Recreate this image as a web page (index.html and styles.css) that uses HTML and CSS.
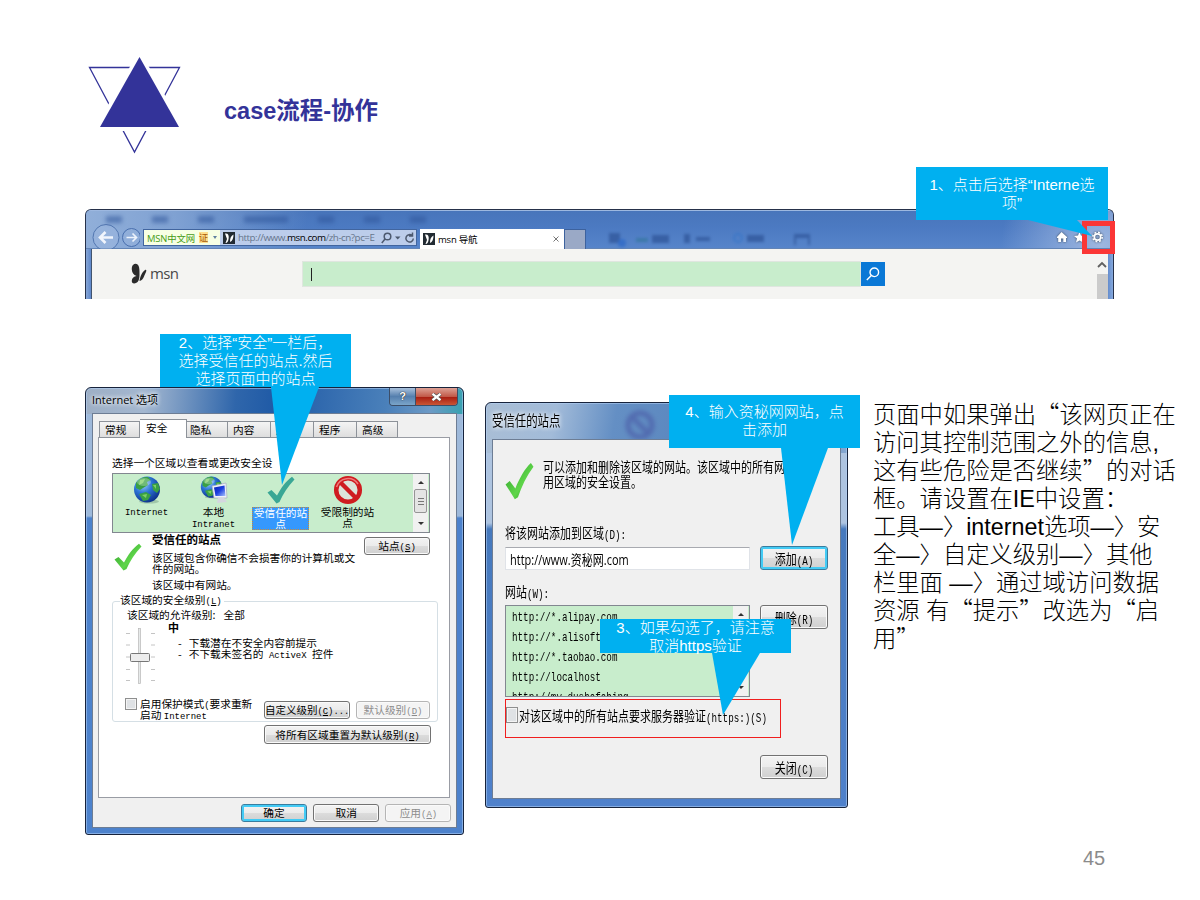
FILE: index.html
```html
<!DOCTYPE html>
<html lang="zh-CN">
<head>
<meta charset="utf-8">
<title>case流程-协作</title>
<link rel="stylesheet" href="styles.css">
</head>
<body>
<svg class="defs" aria-hidden="true">
  <defs>
    <linearGradient id="checkGreen" x1="0" y1="0" x2="1" y2="1"><stop offset="0" stop-color="#2f9e2b"/><stop offset=".6" stop-color="#5fd64a"/><stop offset="1" stop-color="#1f8f1d"/></linearGradient>
    <radialGradient id="sea" cx=".35" cy=".3" r=".75"><stop offset="0" stop-color="#9fd4ff"/><stop offset=".45" stop-color="#2c74d6"/><stop offset="1" stop-color="#0b2f88"/></radialGradient>
    <linearGradient id="screen" x1="0" y1="0" x2="1" y2="1"><stop offset="0" stop-color="#0a1fb0"/><stop offset=".5" stop-color="#1c3fe0"/><stop offset="1" stop-color="#a9c3ff"/></linearGradient>
    <symbol id="check" viewBox="0 0 28 28" preserveAspectRatio="none"><path d="M.5 16.500 L4.500 14 L10 19.500 C14 12 19 5 25 .8 L27.500 3.500 C21 10 16 18 12.500 26 L9.500 27.500 Z"/></symbol>
    <symbol id="globe" viewBox="0 0 28 28"><ellipse cx="16" cy="25.500" rx="10" ry="2" fill="#8fb79a" opacity=".7"/><circle cx="14" cy="13.500" r="13" fill="url(#sea)"/><path d="M3 7 C6 2 11 .8 15 1 L18 4 L14 6 L15 9 L10 12 L7 14 L3 12 Z M19 8 L25 7 L27 13 L24 17 L20 14 Z M6 18 L13 16 L18 19 L15 24 L10 25 Z" fill="#3aa044"/><path d="M7 4 L12 3 L10 7 L6 9 Z M20 9 L23 9 L23 13 Z M9 19 L14 18 L13 22 Z" fill="#8fdc6c" opacity=".8"/><ellipse cx="11" cy="6" rx="7" ry="4" fill="#fff" opacity=".28"/></symbol>
    <symbol id="butterfly" viewBox="0 0 16 21"><path d="M2 2C4 0 7 .5 8 4C8.700 7 8.500 9.500 8.500 12C8.500 16 7.500 19 5 20C2.500 21 .5 20 .8 17.500C1 15 3 13.500 5.500 13C2.500 12 1 9.500 .8 6.500C.7 4.500 1 3 2 2Z"/><path d="M8.500 18C9 14 11 9 14 7C15.300 6.500 15.700 7.500 15 9C14.200 11 13.500 12 13 13.500C12.300 15.800 10.500 17.500 8.500 18Z"/></symbol>
  </defs>
</svg>

<main class="slide">
  <header class="head">
    <svg class="mark" width="94" height="98" viewBox="0 0 94 98">
      <path d="M1.500 11.500H91.500L46.500 96Z" fill="none" stroke="#333399" stroke-width="1.300"/>
      <path d="M51.500 -6 L97 75 H5Z" fill="#fff"/>
      <path d="M51.500 1 L91 71 H12Z" fill="#333399"/>
    </svg>
    <h1 class="title">case流程-协作</h1>
  </header>

  <section class="browser">
    <div class="chrome">
      <div class="ghost-menu"><i></i><i></i><i></i><i class="wide"></i><i></i><i></i><i></i></div>
      <div class="navrow">
        <svg class="nav" width="54" height="25" viewBox="0 0 54 25" fill="none"><circle cx="20" cy="13.500" r="13" fill="#a9bfe4" fill-opacity=".35" stroke="#5377b0"/><path d="M27 13.500H14M19.500 8L14 13.500L19.500 19" stroke="#f1f5fc" stroke-width="2.600"/><circle cx="45.500" cy="13.500" r="9" fill="#a9bfe4" fill-opacity=".25" stroke="#4a6fae"/><path d="M40.500 13.500H50M46.500 9.500L50.500 13.500L46.500 17.500" stroke="#edf3fc" stroke-width="1.700"/></svg>
        <div class="address">
          <span class="site">MSN中文网<b>证</b><i class="caret"></i></span>
          <svg class="fav" width="12" height="12" viewBox="0 0 12 12"><rect width="12" height="12" fill="#222b33"/><path d="M2 1.500C5 1 6 3 5.700 6C5.300 9.500 4.500 11 2.500 11L4 7ZM7 10C7 6 8 4 10.500 2.500C10.500 6 9.500 9 7 10Z" fill="#fff"/></svg>
          <span class="url">http://www.<strong>msn.com</strong>/zh-cn?pc=E</span>
          <svg class="addr-tools" width="34" height="12" viewBox="0 0 34 12" fill="none" stroke="#4d5a70" stroke-width="1.500"><circle cx="6.500" cy="4.500" r="3.300"/><path d="M4 7L.8 11"/><path d="M14 4.500H19.500L16.700 7.500Z" fill="#4d5a70" stroke="none"/><path d="M31 3.500A3.700 3.700 0 1 0 32.300 6.500M31.500 .5V4H28"/></svg>
        </div>
        <div class="tab-page"><svg width="12" height="12" viewBox="0 0 12 12"><rect width="12" height="12" fill="#222b33"/><path d="M2 1.500C5 1 6 3 5.700 6C5.300 9.500 4.500 11 2.500 11L4 7ZM7 10C7 6 8 4 10.500 2.500C10.500 6 9.500 9 7 10Z" fill="#fff"/></svg><span>msn 导航</span><svg class="x" width="6" height="6" viewBox="0 0 6 6"><path d="M.5 .5L5.500 5.500M5.500 .5L.5 5.500" stroke="#777"/></svg></div>
        <div class="tab-new"></div>
        <svg class="ghost-tools" width="210" height="18" viewBox="0 0 210 18"><g fill="#30569a"><rect x="3" y="4" width="11" height="10"/><path d="M46 6H63V14H46ZM78 5H84V14H78ZM90 8H104V12H90ZM141 6H158V13H141ZM188 5H204V9H188ZM188 9H190V16H188ZM202 9H204V16H202Z"/></g><circle cx="16" cy="14" r="4" fill="#2d68c7"/><circle cx="132" cy="9" r="4" fill="none" stroke="#3575c8" stroke-width="2"/><path d="M30 9H42V13H30Z" fill="#35769e"/></svg>
        <svg class="tools" width="50" height="14" viewBox="0 0 50 14" fill="#fff"><path d="M0 7L4.500 2L10 7V8H9V12H6.300V8.500H4V12H1.200V8H0Z"/><path d="M22.500 2L24 5.600L28 6L25 8.600L26 12.500L22.500 10.400L19 12.500L20 8.600L17 6L21 5.600Z"/><g fill="none" stroke="#fff"><circle cx="40.500" cy="7" r="3.200" stroke-width="1.700"/><circle cx="40.500" cy="7" r="4.700" stroke-width="1.500" stroke-dasharray="1.850 1.840"/></g></svg>
      </div>
    </div>
    <div class="page">
      <svg class="bf" width="16" height="21"><use href="#butterfly"/></svg><span class="msn">msn</span>
      <div class="search"><i></i></div>
      <div class="go"><svg width="14" height="14" viewBox="0 0 14 14" fill="none" stroke="#fff" stroke-width="1.400"><circle cx="8.300" cy="5.300" r="4.300"/><path d="M5.300 8.500L.8 13"/></svg></div>
      <div class="vscroll"><svg width="10" height="7" viewBox="0 0 10 7"><path d="M1 6L5 2L9 6" fill="none" stroke="#606060" stroke-width="1.800"/></svg><i></i></div>
    </div>
  </section>
  <div class="redbox"></div>

  <div class="row">
    <section class="dlg options">
      <div class="bar"><span>Internet 选项</span><div class="winbtns"><b>?</b><b class="close"><svg width="11" height="8" viewBox="0 0 11 8"><path d="M1.500 .8L9.500 7.200M9.500 .8L1.500 7.200" stroke="#555" stroke-width="3.600"/><path d="M1.500 .8L9.500 7.200M9.500 .8L1.500 7.200" stroke="#fff" stroke-width="2.200"/></svg></b></div></div>
      <div class="body">
        <div class="tabs"><span>常规</span><span class="on">安全</span><span>隐私</span><span>内容</span><span>连接</span><span>程序</span><span class="last">高级</span></div>
        <div class="panel">
          <p class="hint">选择一个区域以查看或更改安全设</p>
          <div class="zones">
            <div class="zone"><svg width="28" height="28"><use href="#globe"/></svg><span class="m">Internet</span></div>
            <div class="zone"><svg width="28" height="28" viewBox="0 0 28 28"><svg width="23" height="23"><use href="#globe"/></svg><path d="M12 10L26 7L27 22L14 22Z" fill="#eef1f8" stroke="#a6abc0" stroke-width=".7"/><path d="M14 11.500L24.500 9.500L25.500 20L15.500 20Z" fill="url(#screen)"/><path d="M18 22H24L27 26L17 27Z" fill="#d4d6df"/></svg><span>本地<br><em class="m">Intranet</em></span></div>
            <div class="zone"><svg width="28" height="28" fill="#3aa795"><use href="#check"/></svg><span class="sel">受信任的站<br>点</span></div>
            <div class="zone"><svg width="30" height="30" viewBox="0 0 30 30"><circle cx="15" cy="15" r="11.800" fill="#dce4da" stroke="#cf1c20" stroke-width="4.500"/><path d="M7 7L23 23" stroke="#cf1c20" stroke-width="4.500"/><path d="M3.500 12A12 12 0 0 1 25 9" fill="none" stroke="#ef7b7b" stroke-width="1.500"/></svg><span>受限制的站<br>点</span></div>
            <div class="sb"><i class="up"></i><b></b><i class="down"></i></div>
          </div>
          <div class="about">
            <svg width="28" height="28" fill="url(#checkGreen)"><use href="#check"/></svg>
            <div class="about-text"><h2>受信任的站点</h2><p>该区域包含你确信不会损害你的计算机或文<br>件的网站。</p><p class="p2">该区域中有网站。</p></div>
            <button class="btn site-btn">站点<em>(<u>S</u>)</em></button>
          </div>
          <div class="level">
            <div class="legend">该区域的安全级别<em>(<u>L</u>)</em></div>
            <p class="allow">该区域的允许级别:<span>全部</span></p>
            <div class="slider-row">
              <svg width="30" height="60" viewBox="0 0 30 60"><path d="M1 8.500H5M1 20H5M1 32H5M1 44.500H5M1 55.500H5M26 8.500H30M26 20H30M26 32H30M26 44.500H30M26 55.500H30" stroke="#c4c4c4"/><rect x="13.500" y="3.500" width="2" height="55" fill="#e7eaea" stroke="#b7b7b7" stroke-width=".7"/><rect x="5.500" y="28.500" width="19" height="8" rx="1" fill="#ededed" stroke="#777"/></svg>
              <div><h3>中</h3><p class="bul">-<span>下载潜在不安全内容前提示</span></p><p class="bul">-<span>不下载未签名的 <em class="ax">ActiveX</em> 控件</span></p></div>
            </div>
            <div class="protect"><i class="cb"></i><p>启用保护模式<em>(</em>要求重新<br>启动 <em>Internet</em></p><button class="btn b1">自定义级别<em>(<u>C</u>)...</em></button><button class="btn b2 off">默认级别<em>(<u>D</u>)</em></button></div>
          </div>
          <button class="btn reset">将所有区域重置为默认级别<em>(<u>R</u>)</em></button>
        </div>
        <div class="foot"><button class="btn def">确定</button><button class="btn">取消</button><button class="btn off">应用<em>(<u>A</u>)</em></button></div>
      </div>
    </section>

    <section class="dlg trusted">
      <svg class="ghost-no" width="36" height="32" viewBox="0 0 36 32"><circle cx="18" cy="18" r="12" fill="none" stroke="#4a5aa6" stroke-width="5"/><path d="M10 10L26 26" stroke="#4a5aa6" stroke-width="5"/></svg>
      <div class="bar"><span class="tall">受信任的站点</span></div>
      <div class="body">
        <div class="intro"><svg width="29" height="38" fill="url(#checkGreen)"><use href="#check"/></svg><p class="tall">可以添加和删除该区域的网站。该区域中的所有网站都使<br>用区域的安全设置。</p></div>
        <p class="lab l1"><span class="tall">将该网站添加到区域<em>(D):</em></span></p>
        <div class="line"><div class="input"><span class="tall">http://www.资秘网.com</span></div><button class="btn def"><span class="tall">添加<em>(A)</em></span></button></div>
        <p class="lab l2"><span class="tall">网站<em>(W):</em></span></p>
        <div class="line top"><div class="sites"><ul><li>http://*.alipay.com</li><li>http://*.alisoft.com</li><li>http://*.taobao.com</li><li>http://localhost</li><li>http://my.dushafabing</li></ul><div class="sb"><i class="up"></i><i class="down"></i></div></div><button class="btn"><span class="tall">删除<em>(R)</em></span></button></div>
        <div class="verify"><i class="cb"></i><span class="tall">对该区域中的所有站点要求服务器验证<em>(https:)(S)</em></span></div>
        <button class="btn shut"><span class="tall">关闭<em>(C)</em></span></button>
      </div>
    </section>

    <div class="note">
      <div>页面中如果弹出<q>“</q>该网页正在</div>
      <div>访问其控制范围之外的信息,</div>
      <div>这有些危险是否继续<q>”</q>的对话</div>
      <div>框。请设置在IE中设置：</div>
      <div>工具—〉internet选项—〉安</div>
      <div>全—〉自定义级别—〉其他</div>
      <div>栏里面 —〉通过域访问数据</div>
      <div>资源 有<q>“</q>提示<q>”</q>改选为<q>“</q>启</div>
      <div>用<q>”</q></div>
    </div>
  </div>

  <aside class="callout c1"><svg width="66" height="17"><path d="M0 0H49L64 16Z"/></svg>1、点击后选择“Interne选<br>项”</aside>
  <aside class="callout c2"><svg width="48" height="98"><path d="M0 0H48L11 98Z"/></svg>2、选择“安全”一栏后，<br>选择受信任的站点.然后<br>选择页面中的站点</aside>
  <aside class="callout c3"><svg width="48" height="62"><path d="M0 0H48L11 62Z"/></svg>3、如果勾选了，请注意<br>取消https验证</aside>
  <aside class="callout c4"><svg width="47" height="97"><path d="M0 0H47L11 97Z"/></svg>4、输入资秘网网站，点<br>击添加</aside>
  <footer class="num">45</footer>
</main>
</body>
</html>
```

FILE: styles.css
```css
* { box-sizing: border-box; }
body { margin: 0; background: #fff; font-family: "Liberation Sans", "Noto Sans CJK SC", sans-serif; color: #000; text-spacing-trim: space-all; }
p, h1, h2, h3, ul { margin: 0; padding: 0; }
svg { display: block; flex: none; }
em { font-style: normal; font-family: "Liberation Mono", monospace; font-size: .84em; line-height: 0; }
.defs { position: absolute; width: 0; height: 0; }
.slide { position: relative; width: 1200px; height: 900px; overflow: hidden; }

/* heading */
.head { display: flex; height: 209px; padding: 56px 0 0 88px; }
.title { margin: 41px 0 0 42px; font-size: 23.500px; line-height: 28px; color: #333399; white-space: nowrap; }

/* browser strip */
.browser { margin-left: 85px; width: 1029px; height: 90px; padding: 0 5px; border: 1px solid #26314a; border-bottom: 0; border-radius: 6px 6px 0 0; background: linear-gradient(90deg, #87a6d6, #5681c8 6px, #5681c8 1020px, #86a9dc); overflow: hidden; }
.chrome { height: 39px; margin: 0 -5px; border-top: 1px solid #9db8e0; border-bottom: 1px solid #6284b6; background: radial-gradient(circle at 1015px 36px, #9fb7e0 0, rgba(110,148,210,0) 100px), linear-gradient(100deg, #91afd9 0, rgba(145,175,217,.75) 90px, rgba(80,126,195,0) 220px), linear-gradient(#4875bb, #4c7ac2 45%, #5684ca); }
.ghost-menu { display: flex; height: 18px; padding: 5px 0 0 20px; gap: 30px; filter: blur(2px); }
.ghost-menu i { width: 16px; height: 7px; background: #2f559b; opacity: .55; }
.ghost-menu .wide { width: 44px; }
.navrow { display: flex; height: 20px; }
.nav { margin-top: -5px; width: 54px; }
.address { display: flex; align-items: center; margin: 0 0 0 3px; width: 274px; height: 17px; border: 1px solid #41659f; background: #bccdeb; }
.site { display: flex; align-items: center; width: 76px; flex: none; height: 15px; padding-left: 3px; background: #f7ffe4; color: #459b16; font: 9.400px "Open Sans", "Noto Sans CJK SC", sans-serif; letter-spacing: -.15px; white-space: nowrap; }
.site b { margin-left: 4px; background: #ffdf8e; color: #a75b08; font-weight: 400; line-height: 11px; }
.caret { margin-left: 5px; border: 2px solid transparent; border-top: 3px solid #6080a0; border-bottom: 0; }
.fav { margin-left: 3px; }
.url { margin-left: 3px; width: 142px; font: 9.800px "Open Sans", sans-serif; letter-spacing: -.47px; color: #66758c; white-space: nowrap; }
.url strong { font-weight: 400; color: #000; }
.addr-tools { margin-left: 1px; }
.tab-page { display: flex; align-items: center; margin-left: 3px; width: 144px; height: 20px; padding-left: 3px; background: #fff; }
.tab-page span { margin-left: 3px; font: 9.500px "Open Sans", "Noto Sans CJK SC", sans-serif; letter-spacing: -.2px; }
.tab-page .x { margin-left: auto; margin-right: 5px; }
.tab-new { width: 22px; height: 20px; border: 1px solid #3d629e; border-bottom: 0; background: #9aa9c6; }
.ghost-tools { margin-left: 20px; filter: blur(1.500px); opacity: .75; }
.tools { margin: 1px 6px 0 auto; filter: drop-shadow(0 0 1px #345); }
.page { display: flex; height: 51px; border-left: 1px solid #41536e; background: #f4f4f2; }
.bf { margin: 14px 0 0 39px; fill: #2b2b2b; }
.msn { margin-left: 3px; width: 152px; font: 15px/48px "Open Sans", sans-serif; letter-spacing: -.6px; color: #484848; }
.search { margin-top: 12px; width: 559px; height: 26px; border: 1px solid #dfe6df; background: #c8edcc; }
.search i { display: block; margin: 6px 0 0 8px; width: 1px; height: 13px; background: #222; }
.go { display: flex; align-items: center; justify-content: center; margin-top: 13px; width: 24px; height: 24px; background: #0a78d6; }
.vscroll { margin-left: auto; width: 11px; }
.vscroll svg { margin: 12px 0 6px; }
.vscroll i { display: block; height: 30px; background: #cbcbcb; }
.redbox { position: absolute; left: 1082px; top: 221px; width: 33px; height: 33px; border: 5px solid #fb3636; }

/* dialogs */
.row { display: flex; align-items: flex-start; height: 540px; }
.dlg { border: 1px solid #17233b; border-radius: 6px 6px 3px 3px; padding: 0 6px 6px; font-family: "Noto Sans CJK SC", sans-serif; font-size: 10.700px; box-shadow: inset 0 0 0 1px rgba(180,210,245,.55); }
.options { margin: 88px 0 0 85px; width: 379px; height: 448px; background: linear-gradient(95deg, #9eafc5 0, #a3b7d0 60px, #2f66ab 150px, #1f5aa6 190px, #4a80ba 300px, #6c9ac6 345px, #36a2b0 378px) 0 0 / 100% 26px no-repeat, linear-gradient(#9eb9da 128px, #4d82cc 130px); }
.trusted { position: relative; margin: 103px 0 0 21px; width: 363px; height: 406px; background: linear-gradient(100deg, #a9bed5 0, #a2bbd9 70px, #648fc4 130px, #4f7db7 300px, #86a8d1) 0 0 / 100% 50px no-repeat, linear-gradient(#aec4e0 120px, #4679bd 126px, #4f81cb); }
.ghost-no { position: absolute; left: 136px; top: 4px; filter: blur(2px); opacity: .65; }
.bar { display: flex; justify-content: space-between; height: 25px; font-size: 11px; line-height: 23px; white-space: nowrap; }
.options .bar > span { font-family: "Open Sans", "Noto Sans CJK SC", sans-serif; }
.trusted .bar { height: 36px; line-height: 35px; font-size: 11.400px; }
.bar > span { text-shadow: 0 0 5px #fff, 0 0 5px #fff; }
.winbtns { display: flex; margin-right: -1px; height: 18px; border: 1px solid #3c4e68; border-top: 0; border-radius: 0 0 4px 4px; overflow: hidden; }
.winbtns b { width: 25px; background: linear-gradient(#a9c1dc, #557fae 50%, #7ba5c9); color: #fff; font: 700 11px/16px "Liberation Sans", sans-serif; text-align: center; text-shadow: 0 0 1px #222, 0 0 1px #222; }
.winbtns .close { display: flex; align-items: center; justify-content: center; width: 42px; border-left: 1px solid #3c4e68; background: linear-gradient(#dda195, #c25a49 50%, #a91f12 55%, #c95635); }
.body { position: relative; height: 415px; border: 1px solid #6d7d94; background: #f0f0f0; }
.trusted .body { height: 360px; }
.tabs { display: flex; align-items: flex-end; height: 24px; padding-left: 6px; position: relative; z-index: 1; }
.tabs span { width: 43px; height: 17px; padding-left: 5px; border: 1px solid #8d9299; border-left: 0; background: linear-gradient(#f4f4f4, #dedede); line-height: 15px; white-space: nowrap; }
.tabs span:first-child { width: 41px; border-left: 1px solid #8d9299; }
.tabs .on { width: 47px; height: 19px; padding-left: 6px; border-bottom: 0; background: #fff; }
.tabs .on + span { width: 41px; padding-left: 3px; }
.tabs .last { width: 41px; }
.panel { width: 352px; height: 361px; margin: -1px 0 0 5px; padding: 19px 12px 0 13px; border: 1px solid #999ca4; background: #fff; }
.hint { height: 16px; line-height: 11px; white-space: nowrap; }
.zones { display: flex; width: 318px; height: 60px; border: 1px solid #828790; background: #c8edcc; }
.zone { display: flex; flex-direction: column; align-items: center; width: 67px; padding-top: 2px; line-height: 11px; text-align: center; white-space: nowrap; }
.zone svg { margin-bottom: 3px; }
.zone:nth-child(1) svg { margin-bottom: 4px; }
.zone:nth-child(4) { padding-top: 1px; }
.zone:nth-child(4) svg { margin-bottom: 1px; }
.zone:nth-child(2) > span { margin-top: -1px; line-height: 11px; }
.m { font-family: "Liberation Mono", monospace; font-size: 9px; }
.sel { width: 57px; height: 23px; outline: 1px dotted #c58a3c; outline-offset: -1px; background: #3598fd; color: #fff; }
.sb { display: flex; flex-direction: column; justify-content: space-between; align-items: center; margin-left: auto; margin-right: 1px; width: 15px; padding: 7px 0; background: #f1f1f1; }
.sb i { border: 3px solid transparent; }
.sb .up { border-top: 0; border-bottom-color: #333; }
.sb .down { border-bottom: 0; border-top-color: #333; }
.sb b { width: 13px; height: 24px; margin-top: -4px; border: 1px solid #959595; border-radius: 2px; background: repeating-linear-gradient(#777 0 1px, transparent 1px 3px) 3px 8px / 6px 7px no-repeat, #e4e4e4; }
.about { display: flex; height: 61px; }
.about > svg { margin: 10px 0 0 2px; }
.about-text { margin-left: 10px; width: 212px; white-space: nowrap; }
.about h2 { font-size: 11.500px; line-height: 13px; height: 20px; }
.about p { line-height: 10.500px; height: 26px; }
.about .p2 { line-height: 12px; }
.btn { padding: 0; border: 1px solid #727272; border-radius: 3px; background: linear-gradient(#f3f3f3, #ebebeb 50%, #dcdcdc 51%, #d0d0d0); color: #000; font: inherit; font-size: 10.700px; line-height: 14px; white-space: nowrap; box-shadow: inset 0 0 0 1px #fafafa; flex: none; }
.btn.def { border-color: #397d9f; box-shadow: inset 0 0 0 2px #43cbf5; }
.btn.off { border-color: #b5b5b5; background: #f4f4f4; color: #8c8c8c; }
.site-btn { width: 66px; height: 18px; margin-top: 4px; }
.level { width: 326px; height: 121px; border: 1px solid #d5dfe5; border-radius: 3px; margin-top: 7px; padding-left: 7px; }
.level .legend { width: 104px; margin-top: -9px; background: #fff; line-height: 14px; height: 14px; white-space: nowrap; }
.allow { padding-left: 7px; line-height: 15px; height: 15px; }
.allow span { margin-left: 8px; }
.slider-row { display: flex; height: 76px; padding-left: 5px; }
.slider-row svg { margin-top: 3px; }
.slider-row h3 { margin: -2px 0 0 13px; font-size: 11px; line-height: 15px; height: 17px; }
.bul { margin-left: 23px; height: 10.500px; line-height: 11px; white-space: pre; }
.bul span { margin-left: 7px; }
.ax { margin: 0 3px; }
.protect { display: flex; height: 24px; margin-left: 5px; }
.protect p { margin: 0 0 0 3px; width: 125px; height: 24px; line-height: 11px; white-space: nowrap; }
.cb { flex: none; width: 12px; height: 12px; border: 1px solid #8e8f8f; background: #dfe2e5; box-shadow: inset 0 0 0 1px #f4f4f4; }
.protect .b1 { width: 86px; height: 18px; margin: 3px 0 0 -1px; font-size: 10.500px; }
.protect .b2 { width: 74px; height: 18px; margin: 3px 0 0 6px; }
.reset { display: block; width: 167px; height: 19px; margin: 3px 0 0 152px; }
.foot { display: flex; gap: 7px; padding: 6px 0 0 148px; }
.foot .btn { width: 66px; height: 18px; }
.foot .btn + .btn { margin-left: -.8px; }

/* narrow, vertically stretched type of the second dialog */
.tall { display: inline-block; transform: scaleY(1.260); }
.tall em { display: inline-block; transform: scaleY(1.150); }
.trusted { font-size: 11px; }
.trusted .body { padding-left: 12px; }
.trusted .btn { width: 68px; height: 24px; margin-left: 10px; font-size: 11px; line-height: 19px; }
.intro { display: flex; height: 79px; padding-top: 21px; }
.intro svg { margin-top: 1px; }
.intro p { margin: 2px 0 0 9px; height: 25px; line-height: 11.500px; white-space: nowrap; }
.lab { height: 27px; line-height: 26px; white-space: nowrap; }
.line { display: flex; height: 24px; }
.input { width: 245px; height: 23px; padding-left: 4px; border: 1px solid #e0e3e8; border-top-color: #a8aab0; background: #fff; font: 11px/24px "Open Sans", "Noto Sans CJK SC", sans-serif; margin-top: 1px; }
.l2 { height: 35px; line-height: 43px; }
.line.top { height: 94px; }
.sites { display: flex; width: 245px; height: 92px; border: 1px solid #828790; background: #c8edcc; overflow: hidden; }
.sites ul { list-style: none; padding: 5px 0 0 6px; }
.sites li { height: 20px; font: 9.250px/16px "Liberation Mono", monospace; transform: scaleY(1.300); white-space: nowrap; }
.verify { display: flex; align-items: center; width: 276px; height: 39px; border: 1px solid #f01e1e; padding-bottom: 7px; white-space: nowrap; }
.verify .cb { height: 16px; margin-right: 1px; }
.trusted .shut { display: block; margin: 17px 0 0 255px; }

/* side note */
.note { margin: 102px 0 0 25px; width: 320px; font-size: 23.300px; line-height: 28px; white-space: nowrap; font-weight: 300; }
.note div { height: 28px; }
.note q { quotes: none; font-family: "Noto Sans CJK SC", sans-serif; line-height: 0; }

/* callouts */
.callout { position: absolute; z-index: 2; display: flow-root; background: #00b0f0; color: #fff; font-size: 15px; line-height: 18px; text-align: center; white-space: nowrap; width: 191px; font-weight: 300; }
.callout svg { position: absolute; fill: #00b0f0; top: 100%; }
.c1 { left: 916px; top: 167px; width: 192px; height: 53px; padding-top: 9px; }
.c1 svg { left: 112px; }
.c2 { left: 160px; top: 334px; height: 53px; }
.c2 svg { left: 111px; }
.c3 { left: 600px; top: 619px; height: 34px; }
.c3 svg { left: 112px; }
.c4 { left: 669px; top: 395px; height: 53px; padding-top: 8px; }
.c4 svg { left: 112px; }
.num { position: absolute; left: 1083px; top: 846px; font: 20px/24px "Liberation Sans", sans-serif; color: #8b8b8b; }
```
